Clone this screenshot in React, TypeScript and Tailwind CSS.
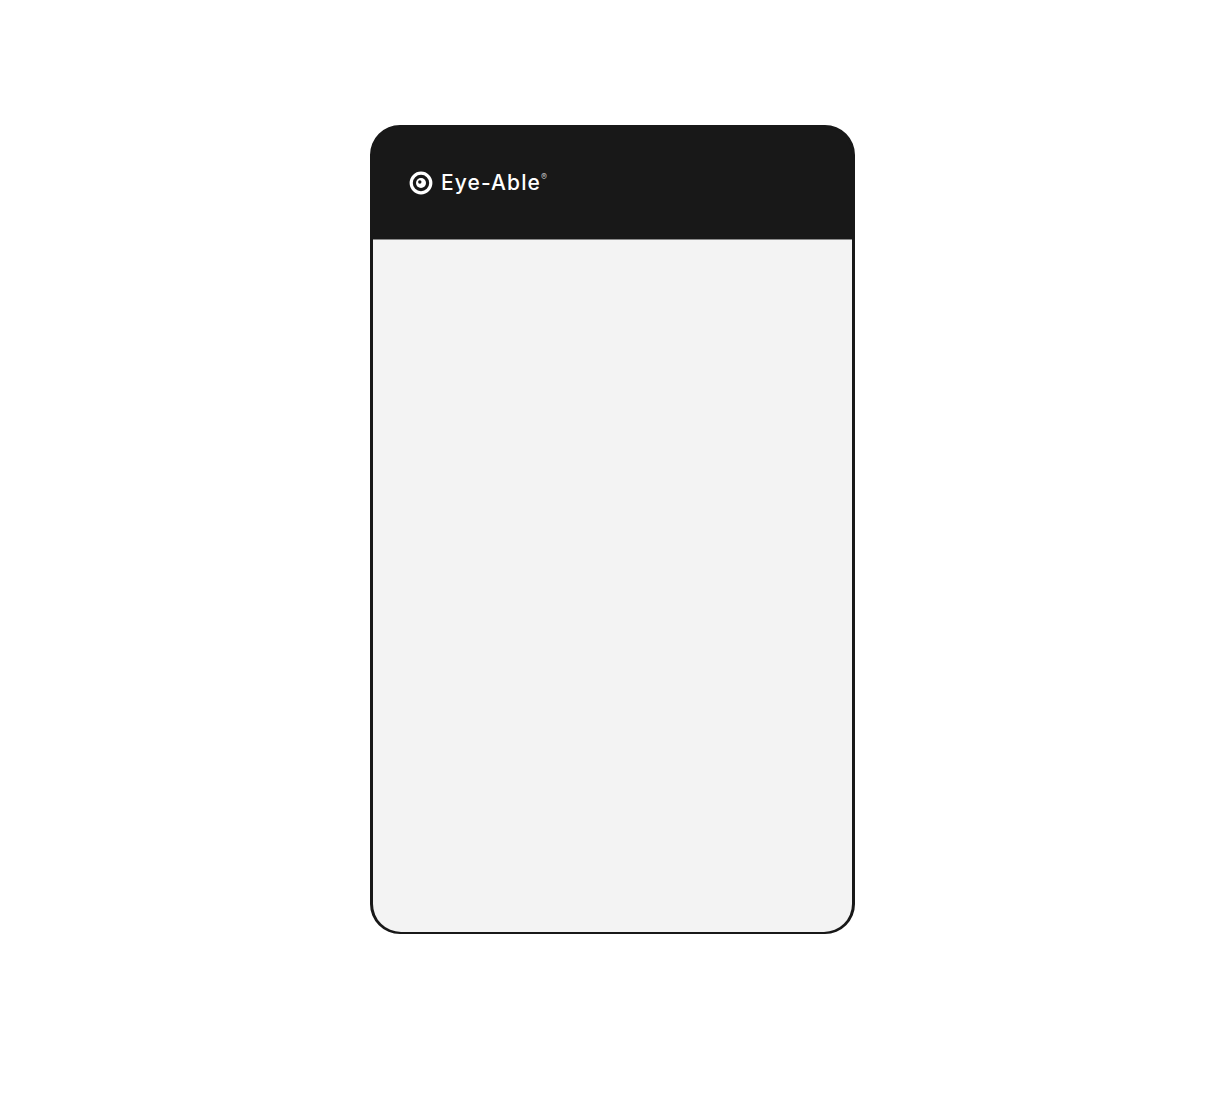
export default function App() {
  return (
    <div className="min-h-[1094px] bg-white pl-[370px] pt-[125px]">
      <div className="flex h-[809px] w-[485px] flex-col rounded-[30px] border-x-[3px] border-t-2 border-b-2 border-[#181818] bg-[#181818]">
        <header className="flex h-[113px] items-center border-b border-[#8a8a8a] pl-[36px]">
          <svg width="24" height="24" viewBox="0 0 24 24" className="shrink-0" aria-hidden="true">
            <circle cx="12" cy="12" r="9.8" fill="none" stroke="#fff" strokeWidth="3.2" />
            <circle cx="12" cy="12" r="5" fill="#fff" />
            <circle cx="10.8" cy="11" r="1.7" fill="#181818" />
          </svg>
          <span className="ml-[8px] flex items-start font-['Inter',sans-serif] text-[21px] leading-6 font-medium tracking-[1.1px] text-white">
            Eye-Able
            <span className="mt-[2px] text-[9px] leading-[8px] tracking-normal text-[#b5b5b5]">®</span>
          </span>
        </header>
        <main className="flex-1 rounded-b-[28px] bg-[#f3f3f3]" />
      </div>
    </div>
  );
}
